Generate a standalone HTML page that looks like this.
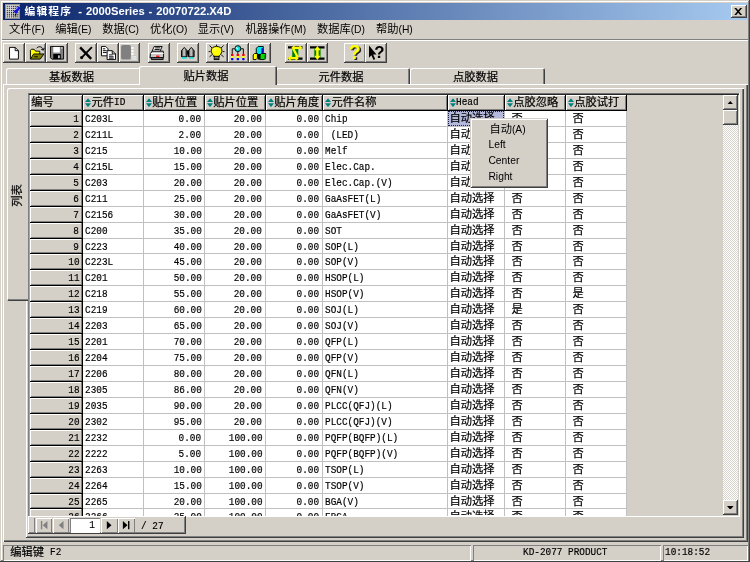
<!DOCTYPE html><html lang="zh"><head><meta charset="utf-8"><title>编辑程序</title><style>
*{box-sizing:border-box;margin:0;padding:0}
html,body{width:750px;height:562px;overflow:hidden;background:#d4d0c8}
#w{position:absolute;left:0;top:0;width:750px;height:562px;background:#d4d0c8;will-change:transform;
 font-family:"Liberation Serif","Noto Sans CJK SC",serif;font-size:11.25px;line-height:15px;color:#000;overflow:hidden}
#w div,#w span,#w svg{position:absolute}
.ui{font-family:"Liberation Sans","Noto Sans CJK SC",sans-serif;white-space:pre}
.t{white-space:pre;height:15px;-webkit-text-stroke:.2px #000}
.mo{-webkit-text-stroke:.2px #000;font-family:"Liberation Mono",monospace;font-size:11.25px;line-height:15px;height:15px;white-space:pre;transform:scaleX(0.8333);transform-origin:0 0}
.mr{transform-origin:100% 0;text-align:right}
.m{height:18px;line-height:17px;font-size:11.25px}
.m i{font-style:normal;font-size:10.3px}
.hc{background:#d4d0c8;box-shadow:inset 1px 1px 0 #fff,inset -1px -1px 0 #808080}
</style></head><body><div id="w">
<div style="left:0;top:0;width:750px;height:562px;box-shadow:inset -1px -1px 0 #404040,inset 1px 1px 0 #d4d0c8,inset -2px -2px 0 #808080,inset 2px 2px 0 #fff"></div>
<div style="left:3px;top:3px;width:745px;height:17px;background:linear-gradient(90deg,#0a246a 0%,#a6caf0 100%)"></div>
<svg style="left:4.69px;top:3.75px" width="15.0" height="15.0" viewBox="0 0 16 16"><rect x="0.5" y="0.5" width="15" height="15" fill="#d8d8d8" stroke="#909090"/><defs><pattern id="dg" x="1.700" y="1.700" width="2.300" height="2.300" patternUnits="userSpaceOnUse"><rect width="1.300" height="1.300" fill="#101010"/></pattern></defs><rect x="1.700" y="1.700" width="12.800" height="12.800" fill="url(#dg)"/><path d="M9.300 8.300l4.200-6.300 2.800 2-4.200 6.300z" fill="#1010e8"/><path d="M10.800 6.200l3.200-2.600" stroke="#d0d0ff" stroke-width=".9"/><path d="M11.500 10.300l-.6 2.200" stroke="#000" stroke-width="1"/></svg>
<div class="ui" style="left:24.6px;top:3.8px;height:15px;line-height:15px;color:#fff;font-weight:bold;font-size:11.25px"><span style="position:static;letter-spacing:1.1px;font-size:10.75px">编辑程序</span><span style="position:static;word-spacing:.75px;margin-left:2.4px"> - 2000Series - 20070722.X4D</span></div>
<div style="left:731px;top:5px;width:16px;height:13px;box-shadow:inset -1px -1px 0 #404040,inset 1px 1px 0 #fff,inset -2px -2px 0 #808080;background:#d4d0c8"></div>
<svg style="left:734.44px;top:7.88px" width="8.44" height="6.94" viewBox="0 0 8 7"><path d="M0 0h2l2 2.3L6 0h2L5 3.5 8 7H6L4 4.7 2 7H0l3-3.5z" fill="#000"/></svg>
<div class="ui m" style="left:8.91px;top:20.62px;">文件<i>(F)</i></div>
<div class="ui m" style="left:55.31px;top:20.62px;">编辑<i>(E)</i></div>
<div class="ui m" style="left:102.19px;top:20.62px;">数据<i>(C)</i></div>
<div class="ui m" style="left:150.0px;top:20.62px;">优化<i>(O)</i></div>
<div class="ui m" style="left:197.81px;top:20.62px;">显示<i>(V)</i></div>
<div class="ui m" style="left:245.62px;top:20.62px;">机器操作<i>(M)</i></div>
<div class="ui m" style="left:316.88px;top:20.62px;">数据库<i>(D)</i></div>
<div class="ui m" style="left:375.94px;top:20.62px;">帮助<i>(H)</i></div>
<div style="left:2px;top:39px;width:746px;height:1px;background:#808080"></div>
<div style="left:2px;top:40px;width:746px;height:1px;background:#fff"></div>
<div style="left:3px;top:43px;width:22px;height:20px;box-shadow:inset -1px -1px 0 #404040,inset 1px 1px 0 #fff,inset -2px -2px 0 #808080;background:#d4d0c8"></div>
<svg style="left:7.03px;top:45.94px;overflow:visible" width="15" height="14.06" viewBox="0 0 16 15"><path d="M2.700 1.500h6l3.500 3.500v9h-9.500z" fill="#fff" stroke="#000"/><path d="M8.700 1.500v3.500h3.500" fill="none" stroke="#000"/></svg>
<div style="left:25px;top:43px;width:21px;height:20px;box-shadow:inset -1px -1px 0 #404040,inset 1px 1px 0 #fff,inset -2px -2px 0 #808080;background:#d4d0c8"></div>
<svg style="left:28.59px;top:45.94px;overflow:visible" width="15" height="14.06" viewBox="0 0 16 15"><path d="M1.500 14V4.500l1-1h3l1.500 2h4.500v3" fill="#ffff00" stroke="#000"/><path d="M1.500 14l3.500-5.500h11l-4 5.500z" fill="#808000" stroke="#000"/><path d="M5.500 11.500h4" stroke="#000"/><path d="M8 2.500c2-2.500 6-2.500 7 1.500" fill="none" stroke="#000"/><path d="M13 3.500l2.300 1 .900-2.500" fill="none" stroke="#000"/></svg>
<div style="left:46px;top:43px;width:22px;height:20px;box-shadow:inset -1px -1px 0 #404040,inset 1px 1px 0 #fff,inset -2px -2px 0 #808080;background:#d4d0c8"></div>
<svg style="left:50.16px;top:45.94px;overflow:visible" width="15" height="14.06" viewBox="0 0 16 15"><path d="M.500.500h14v13.500h-12.500l-1.500-1.500z" fill="#808080" stroke="#000"/><rect x="3.500" y="1" width="7" height="6" fill="#fff"/><rect x="3.500" y="8.500" width="8" height="5.500" fill="#000"/><rect x="8.500" y="10" width="2" height="3" fill="#c0c0c0"/><rect x="12" y="1.500" width="1.200" height="1.200" fill="#fff"/></svg>
<div style="left:75px;top:43px;width:22px;height:20px;box-shadow:inset -1px -1px 0 #404040,inset 1px 1px 0 #fff,inset -2px -2px 0 #808080;background:#d4d0c8"></div>
<svg style="left:79.22px;top:45.94px;overflow:visible" width="15" height="14.06" viewBox="0 0 16 15"><path d="M1.200 1.500L13 13.800" stroke="#000" stroke-width="2.600" fill="none"/><path d="M13.800 1.300L2.800 12.300" stroke="#000" stroke-width="1.900" fill="none"/><circle cx="2.800" cy="12.400" r="1.700" fill="#000"/></svg>
<div style="left:97px;top:43px;width:22px;height:20px;box-shadow:inset -1px -1px 0 #404040,inset 1px 1px 0 #fff,inset -2px -2px 0 #808080;background:#d4d0c8"></div>
<svg style="left:100.78px;top:45.94px;overflow:visible" width="15" height="14.06" viewBox="0 0 16 15"><path d="M.500.500h4.500l2.500 2.500v7.500h-7z" fill="#fff" stroke="#000"/><path d="M2 3h2.500M2 5h4M2 7h4" stroke="#000"/><path d="M6.500 5h5.500l3.500 3.500v6h-9z" fill="#fff" stroke="#000"/><path d="M12 5v3.500h3.500" fill="none" stroke="#000"/><path d="M8.500 9.500h4M8.500 11.500h5M8.500 13h5" stroke="#000"/></svg>
<div style="left:119px;top:43px;width:21px;height:20px;box-shadow:inset -1px -1px 0 #404040,inset 1px 1px 0 #fff,inset -2px -2px 0 #808080;background:#d4d0c8"></div>
<svg style="left:122.34px;top:45.94px;overflow:visible" width="15" height="14.06" viewBox="0 0 16 15"><rect x="-1" y="-1.200" width="10.500" height="15.700" rx="2" fill="#808080"/><path d="M10 1h2.300v2.300h-2.300zM10 4.300h2.300v2.300h-2.300zM10 7.600h2.300v2.300h-2.300z" fill="#fff"/><path d="M9.800 10.800h6v4h-6z" fill="#fff" stroke="#b0b0b0" stroke-width=".5"/><path d="M10 12.800h5.500" stroke="#b8b8b8"/></svg>
<div style="left:148px;top:43px;width:22px;height:20px;box-shadow:inset -1px -1px 0 #404040,inset 1px 1px 0 #fff,inset -2px -2px 0 #808080;background:#d4d0c8"></div>
<svg style="left:150.47px;top:45.94px;overflow:visible" width="15" height="14.06" viewBox="0 0 16 15"><path d="M4.500.500h8.500l-2.500 5.500h-8.500z" fill="#fff" stroke="#000"/><path d="M5.500 2h5.500M4.800 3.700h5.500" stroke="#000"/><path d="M.500 8l2-2.500h11.500l.500 2.500v4.500h-14.500z" fill="#c8c8c8" stroke="#000"/><path d="M1 8h13.500" stroke="#fff"/><path d="M1.500 12.500h12.500v2h-12.500z" fill="#808080" stroke="#000"/><rect x="6.500" y="10.200" width="3.500" height="1.400" fill="#ff0000"/></svg>
<div style="left:177px;top:43px;width:22px;height:20px;box-shadow:inset -1px -1px 0 #404040,inset 1px 1px 0 #fff,inset -2px -2px 0 #808080;background:#d4d0c8"></div>
<svg style="left:180.94px;top:45.94px;overflow:visible" width="15" height="14.06" viewBox="0 0 16 15"><defs><linearGradient id="bg" x1="0" x2="1"><stop offset="0" stop-color="#202020"/><stop offset=".45" stop-color="#d8d8d8"/><stop offset="1" stop-color="#202020"/></linearGradient></defs><path d="M.500 11.500V5l3-3.500 3 3.500v6.500z" fill="url(#bg)" stroke="#000"/><path d="M8 11.500V5l3-3.500 3 3.500v6.500z" fill="url(#bg)" stroke="#000"/><rect x="6.500" y="5" width="1.500" height="4" fill="#000"/><rect x="1" y="12" width="5" height="1.500" fill="#00e0e0"/><rect x="8.500" y="12" width="5" height="1.500" fill="#00e0e0"/></svg>
<div style="left:206px;top:43px;width:22px;height:20px;box-shadow:inset -1px -1px 0 #404040,inset 1px 1px 0 #fff,inset -2px -2px 0 #808080;background:#d4d0c8"></div>
<svg style="left:210.0px;top:45.94px;overflow:visible" width="15" height="14.06" viewBox="0 0 16 15"><path d="M-.500 -.500l3 3M14.500 -.500l-3 3M7 -1.500v1.500M-1.500 6h2M15.500 6h-2M-.500 11.500l2.500-2M14.500 11.500l-2.500-2" stroke="#000"/><path d="M7 .500c-7 0-7 6.500-3 9.800v1h6v-1c4-3.300 4-9.800-3-9.800z" fill="#ffff00" stroke="#000"/><path d="M4 3.500l2-1.500M4.500 5l2.500-2" stroke="#fff" stroke-width=".7"/><rect x="4.500" y="11" width="5" height="3.500" fill="#c0c0c0" stroke="#000"/><path d="M5 13h4" stroke="#000"/></svg>
<div style="left:228px;top:43px;width:21px;height:20px;box-shadow:inset -1px -1px 0 #404040,inset 1px 1px 0 #fff,inset -2px -2px 0 #808080;background:#d4d0c8"></div>
<svg style="left:230.91px;top:45.94px;overflow:visible" width="15" height="14.06" viewBox="0 0 16 15"><circle cx="7.300" cy="2.800" r="3.200" fill="#00e0e0" stroke="#000"/><path d="M5.500 1.500l2 2" stroke="#fff" stroke-width="1.200"/><path d="M4 3H1.300v5.500M10.500 3h2.700v5.500M7.300 6v2.500" fill="none" stroke="#000"/><rect x="0" y="8.500" width="2.600" height="2.200" fill="#ff0000"/><rect x="0" y="10.700" width="2.600" height="2.200" fill="#ffff00"/><rect x="0" y="12.900" width="2.600" height="2.200" rx=".8" fill="#0000ff"/><rect x="6" y="8.500" width="2.600" height="2.200" fill="#ff0000"/><rect x="6" y="10.700" width="2.600" height="2.200" fill="#ffff00"/><rect x="6" y="12.900" width="2.600" height="2.200" rx=".8" fill="#0000ff"/><rect x="11.9" y="8.500" width="2.600" height="2.200" fill="#ff0000"/><rect x="11.9" y="10.700" width="2.600" height="2.200" fill="#ffff00"/><rect x="11.9" y="12.900" width="2.600" height="2.200" rx=".8" fill="#0000ff"/></svg>
<div style="left:249px;top:43px;width:22px;height:20px;box-shadow:inset -1px -1px 0 #404040,inset 1px 1px 0 #fff,inset -2px -2px 0 #808080;background:#d4d0c8"></div>
<svg style="left:253.12px;top:45.94px;overflow:visible" width="15" height="14.06" viewBox="0 0 16 15"><path d="M3.500 2.500l2-2h5.500v6.500l-2 2h-5.500z" fill="#00e8e8" stroke="#000"/><path d="M9.800 2.500v6" stroke="#0000c0" stroke-width="1.600"/><path d="M.200 9.500l1.500-1.500h3v5l-1.500 1.500h-3z" fill="#ffff00" stroke="#000"/><path d="M7.500 9.500l1.500-1.500h4.500v5l-1.500 1.500h-4.500z" fill="#00e000" stroke="#000"/><path d="M12.700 9.500v5" stroke="#008000" stroke-width="1.500"/><rect x="5" y="9" width="2.500" height="5.500" fill="#000"/></svg>
<div style="left:285px;top:43px;width:22px;height:20px;box-shadow:inset -1px -1px 0 #404040,inset 1px 1px 0 #fff,inset -2px -2px 0 #808080;background:#d4d0c8"></div>
<svg style="left:288.0px;top:45.94px;overflow:visible" width="15" height="14.06" viewBox="0 0 16 15"><path d="M0 1.500h15.500M0 13.500h15.500" stroke="#000" stroke-width="2.200"/><rect x="4.500" y="2.500" width="6.500" height="10" fill="#008000"/><path d="M5.500 2h7M3 13h7M5.500 3L10.500 12" stroke="#ffff00" stroke-width="2.400"/><path d="M3.500 2L7-1v6zM15.500 2L12-1v6zM-.500 13L3 10v6zM11.500 13L8 10v6z" fill="#ffff00"/></svg>
<div style="left:307px;top:43px;width:21px;height:20px;box-shadow:inset -1px -1px 0 #404040,inset 1px 1px 0 #fff,inset -2px -2px 0 #808080;background:#d4d0c8"></div>
<svg style="left:310.31px;top:45.94px;overflow:visible" width="15" height="14.06" viewBox="0 0 16 15"><path d="M0 1.500h15.500M0 13.500h15.500" stroke="#000" stroke-width="2.200"/><rect x="4.500" y="2.500" width="6.800" height="10" fill="#008000"/><path d="M7.900 3v9" stroke="#ffff00" stroke-width="2.600"/><path d="M4.500 4.500L7.900 0l3.400 4.500zM4.500 10.500l3.400 4.500 3.400-4.500z" fill="#ffff00"/></svg>
<div style="left:344px;top:43px;width:22px;height:20px;box-shadow:inset -1px -1px 0 #404040,inset 1px 1px 0 #fff,inset -2px -2px 0 #808080;background:#d4d0c8"></div>
<svg style="left:347.81px;top:45.94px;overflow:visible" width="15" height="14.06" viewBox="0 0 16 15"><text x="8.800" y="15.200" font-family="Liberation Sans,sans-serif" font-weight="bold" font-size="21" text-anchor="middle" fill="#202020">?</text><text x="7.300" y="14" font-family="Liberation Sans,sans-serif" font-weight="bold" font-size="21" text-anchor="middle" fill="#ffff00">?</text></svg>
<div style="left:365px;top:43px;width:22px;height:20px;box-shadow:inset -1px -1px 0 #404040,inset 1px 1px 0 #fff,inset -2px -2px 0 #808080;background:#d4d0c8"></div>
<svg style="left:368.91px;top:45.94px;overflow:visible" width="15" height="14.06" viewBox="0 0 16 15"><path d="M0 -.500v13l2.600-2.600 2.200 5 1.800-.900-2.200-4.800H8z" fill="#000"/><text x="11.200" y="12.300" font-family="Liberation Sans,sans-serif" font-weight="bold" font-size="18" text-anchor="middle" fill="#000">?</text></svg>
<div style="left:3px;top:84px;width:745px;height:458px;box-shadow:inset 1px 1px 0 #fff,inset -1px -1px 0 #404040,inset -2px -2px 0 #808080"></div>
<div style="left:6px;top:68px;width:135px;height:16px;background:#d4d0c8;border-radius:2px 2px 0 0;box-shadow:inset 1px 1px 0 #fff,inset -1px 0 0 #404040,inset -2px 0 0 #808080"></div>
<div class="t" style="left:4px;top:70.31px;width:135px;text-align:center">基板数据</div>
<div style="left:276px;top:68px;width:134px;height:16px;background:#d4d0c8;border-radius:2px 2px 0 0;box-shadow:inset 1px 1px 0 #fff,inset -1px 0 0 #404040,inset -2px 0 0 #808080"></div>
<div class="t" style="left:274px;top:70.31px;width:134px;text-align:center">元件数据</div>
<div style="left:410px;top:68px;width:135px;height:16px;background:#d4d0c8;border-radius:2px 2px 0 0;box-shadow:inset 1px 1px 0 #fff,inset -1px 0 0 #404040,inset -2px 0 0 #808080"></div>
<div class="t" style="left:408px;top:70.31px;width:135px;text-align:center">点胶数据</div>
<div style="left:139px;top:66px;width:138px;height:19px;background:#d4d0c8;border-radius:2px 2px 0 0;box-shadow:inset 1px 1px 0 #fff,inset -1px 0 0 #404040,inset -2px 0 0 #808080"></div>
<div class="t" style="left:137px;top:68.91px;width:138px;text-align:center">贴片数据</div>
<div style="left:26px;top:88px;width:718px;height:450px;box-shadow:inset 0 1px 0 #fff,inset -1px -1px 0 #404040,inset -2px -2px 0 #808080"></div>
<div style="left:26px;top:301px;width:1px;height:236px;background:#fff"></div>
<div style="left:7px;top:88px;width:21px;height:213px;background:#d4d0c8;border-radius:2px 0 0 2px;box-shadow:inset 1px 1px 0 #fff,inset 0 -1px 0 #404040,inset 0 -2px 0 #808080"></div>
<div class="t" style="left:-13.120000000000001px;top:187.5px;width:60px;text-align:center;transform:rotate(-90deg)">列表</div>
<div style="left:28px;top:93px;width:712px;height:424px;background:#d4d0c8;box-shadow:inset -1px -1px 0 #fff"></div>
<div style="left:28px;top:93px;width:1px;height:423px;background:#808080"></div>
<div style="left:29px;top:93px;width:1px;height:423px;background:#a4a4a4"></div>
<div style="left:28px;top:93px;width:711px;height:1px;background:#707070"></div>
<div style="left:29px;top:94px;width:710px;height:1px;background:#282828"></div>
<div style="left:83px;top:111px;width:544px;height:405px;background:#fff"></div>
<div class="hc" style="left:30px;top:95px;width:52px;height:15px"></div>
<div class="t" style="left:31.31px;top:95.25px;">编号</div>
<div style="left:82px;top:95px;width:1px;height:16px;background:#000"></div>
<div class="hc" style="left:83px;top:95px;width:60px;height:15px"></div>
<svg style="left:84.94px;top:98.06px" width="6.0" height="9.38" viewBox="0 0 7 10.500"><path d="M3.500 0L7 4.500H0zM3.500 10.500L7 6H0z" fill="#008080"/></svg>
<div class="t" style="left:91.41px;top:95.25px;">元件</div>
<div class="mo" style="left:113.91px;top:95.25px;">ID</div>
<div style="left:143px;top:95px;width:1px;height:16px;background:#000"></div>
<div class="hc" style="left:144px;top:95px;width:60px;height:15px"></div>
<svg style="left:145.88px;top:98.06px" width="6.0" height="9.38" viewBox="0 0 7 10.500"><path d="M3.500 0L7 4.500H0zM3.500 10.500L7 6H0z" fill="#008080"/></svg>
<div class="t" style="left:152.34px;top:95.25px;">贴片位置</div>
<div style="left:204px;top:95px;width:1px;height:16px;background:#000"></div>
<div class="hc" style="left:205px;top:95px;width:60px;height:15px"></div>
<svg style="left:206.81px;top:98.06px" width="6.0" height="9.38" viewBox="0 0 7 10.500"><path d="M3.500 0L7 4.500H0zM3.500 10.500L7 6H0z" fill="#008080"/></svg>
<div class="t" style="left:213.28px;top:95.25px;">贴片位置</div>
<div style="left:265px;top:95px;width:1px;height:16px;background:#000"></div>
<div class="hc" style="left:266px;top:95px;width:56px;height:15px"></div>
<svg style="left:267.75px;top:98.06px" width="6.0" height="9.38" viewBox="0 0 7 10.500"><path d="M3.500 0L7 4.500H0zM3.500 10.500L7 6H0z" fill="#008080"/></svg>
<div class="t" style="left:274.22px;top:95.25px;">贴片角度</div>
<div style="left:322px;top:95px;width:1px;height:16px;background:#000"></div>
<div class="hc" style="left:323px;top:95px;width:124px;height:15px"></div>
<svg style="left:324.94px;top:98.06px" width="6.0" height="9.38" viewBox="0 0 7 10.500"><path d="M3.500 0L7 4.500H0zM3.500 10.500L7 6H0z" fill="#008080"/></svg>
<div class="t" style="left:331.41px;top:95.25px;">元件名称</div>
<div style="left:447px;top:95px;width:1px;height:16px;background:#000"></div>
<div class="hc" style="left:448px;top:95px;width:56px;height:15px"></div>
<svg style="left:449.62px;top:98.06px" width="6.0" height="9.38" viewBox="0 0 7 10.500"><path d="M3.500 0L7 4.500H0zM3.500 10.500L7 6H0z" fill="#008080"/></svg>
<div class="mo" style="left:456.09px;top:95.25px;">Head</div>
<div style="left:504px;top:95px;width:1px;height:16px;background:#000"></div>
<div class="hc" style="left:505px;top:95px;width:60px;height:15px"></div>
<svg style="left:506.81px;top:98.06px" width="6.0" height="9.38" viewBox="0 0 7 10.500"><path d="M3.500 0L7 4.500H0zM3.500 10.500L7 6H0z" fill="#008080"/></svg>
<div class="t" style="left:513.28px;top:95.25px;">点胶忽略</div>
<div style="left:565px;top:95px;width:1px;height:16px;background:#000"></div>
<div class="hc" style="left:566px;top:95px;width:60px;height:15px"></div>
<svg style="left:567.75px;top:98.06px" width="6.0" height="9.38" viewBox="0 0 7 10.500"><path d="M3.500 0L7 4.500H0zM3.500 10.500L7 6H0z" fill="#008080"/></svg>
<div class="t" style="left:574.22px;top:95.25px;">点胶试打</div>
<div style="left:626px;top:95px;width:1px;height:16px;background:#000"></div>
<div style="left:30px;top:110px;width:597px;height:1px;background:#000"></div>
<div style="left:82px;top:111px;width:1px;height:405px;background:#000"></div>
<div style="left:81px;top:111px;width:1px;height:405px;background:#808080"></div>
<div style="left:143px;top:111px;width:1px;height:405px;background:#c0c0c0"></div>
<div style="left:204px;top:111px;width:1px;height:405px;background:#c0c0c0"></div>
<div style="left:265px;top:111px;width:1px;height:405px;background:#c0c0c0"></div>
<div style="left:322px;top:111px;width:1px;height:405px;background:#c0c0c0"></div>
<div style="left:447px;top:111px;width:1px;height:405px;background:#c0c0c0"></div>
<div style="left:504px;top:111px;width:1px;height:405px;background:#c0c0c0"></div>
<div style="left:565px;top:111px;width:1px;height:405px;background:#c0c0c0"></div>
<div style="left:626px;top:111px;width:1px;height:405px;background:#c0c0c0"></div>
<div style="left:30px;top:111px;width:51px;height:15px;background:#d4d0c8;box-shadow:inset 1px 1px 0 #fff,inset 0 -1px 0 #808080"></div>
<div style="left:30px;top:126px;width:52px;height:1px;background:#000"></div>
<div style="left:83px;top:126px;width:544px;height:1px;background:#c0c0c0"></div>
<div style="left:448px;top:111px;width:56px;height:15px;background:#b4b8dc;outline:1px dotted #202040;outline-offset:-1px"></div>
<div class="mo mr" style="right:670.78px;top:112.0px;">1</div>
<div class="mo" style="left:84.66px;top:112.0px;">C203L</div>
<div class="mo mr" style="right:548.72px;top:112.0px;">0.00</div>
<div class="mo mr" style="right:487.78px;top:112.0px;">20.00</div>
<div class="mo mr" style="right:430.59px;top:112.0px;">0.00</div>
<div class="mo" style="left:324.56px;top:112.0px;">Chip</div>
<div class="t" style="left:449.44px;top:111.0px;">自动选择</div>
<div class="t" style="left:511.59px;top:111.0px;">否</div>
<div class="t" style="left:572.53px;top:111.0px;">否</div>
<div style="left:30px;top:127px;width:51px;height:15px;background:#d4d0c8;box-shadow:inset 1px 1px 0 #fff,inset 0 -1px 0 #808080"></div>
<div style="left:30px;top:142px;width:52px;height:1px;background:#000"></div>
<div style="left:83px;top:142px;width:544px;height:1px;background:#c0c0c0"></div>
<div class="mo mr" style="right:670.78px;top:128.0px;">2</div>
<div class="mo" style="left:84.66px;top:128.0px;">C211L</div>
<div class="mo mr" style="right:548.72px;top:128.0px;">2.00</div>
<div class="mo mr" style="right:487.78px;top:128.0px;">20.00</div>
<div class="mo mr" style="right:430.59px;top:128.0px;">0.00</div>
<div class="mo" style="left:324.56px;top:128.0px;">&nbsp;(LED)</div>
<div class="t" style="left:449.44px;top:127.0px;">自动选择</div>
<div class="t" style="left:511.59px;top:127.0px;">否</div>
<div class="t" style="left:572.53px;top:127.0px;">否</div>
<div style="left:30px;top:143px;width:51px;height:15px;background:#d4d0c8;box-shadow:inset 1px 1px 0 #fff,inset 0 -1px 0 #808080"></div>
<div style="left:30px;top:158px;width:52px;height:1px;background:#000"></div>
<div style="left:83px;top:158px;width:544px;height:1px;background:#c0c0c0"></div>
<div class="mo mr" style="right:670.78px;top:144.0px;">3</div>
<div class="mo" style="left:84.66px;top:144.0px;">C215</div>
<div class="mo mr" style="right:548.72px;top:144.0px;">10.00</div>
<div class="mo mr" style="right:487.78px;top:144.0px;">20.00</div>
<div class="mo mr" style="right:430.59px;top:144.0px;">0.00</div>
<div class="mo" style="left:324.56px;top:144.0px;">Melf</div>
<div class="t" style="left:449.44px;top:143.0px;">自动选择</div>
<div class="t" style="left:511.59px;top:143.0px;">否</div>
<div class="t" style="left:572.53px;top:143.0px;">否</div>
<div style="left:30px;top:159px;width:51px;height:15px;background:#d4d0c8;box-shadow:inset 1px 1px 0 #fff,inset 0 -1px 0 #808080"></div>
<div style="left:30px;top:174px;width:52px;height:1px;background:#000"></div>
<div style="left:83px;top:174px;width:544px;height:1px;background:#c0c0c0"></div>
<div class="mo mr" style="right:670.78px;top:160.0px;">4</div>
<div class="mo" style="left:84.66px;top:160.0px;">C215L</div>
<div class="mo mr" style="right:548.72px;top:160.0px;">15.00</div>
<div class="mo mr" style="right:487.78px;top:160.0px;">20.00</div>
<div class="mo mr" style="right:430.59px;top:160.0px;">0.00</div>
<div class="mo" style="left:324.56px;top:160.0px;">Elec.Cap.</div>
<div class="t" style="left:449.44px;top:159.0px;">自动选择</div>
<div class="t" style="left:511.59px;top:159.0px;">否</div>
<div class="t" style="left:572.53px;top:159.0px;">否</div>
<div style="left:30px;top:175px;width:51px;height:15px;background:#d4d0c8;box-shadow:inset 1px 1px 0 #fff,inset 0 -1px 0 #808080"></div>
<div style="left:30px;top:190px;width:52px;height:1px;background:#000"></div>
<div style="left:83px;top:190px;width:544px;height:1px;background:#c0c0c0"></div>
<div class="mo mr" style="right:670.78px;top:176.0px;">5</div>
<div class="mo" style="left:84.66px;top:176.0px;">C203</div>
<div class="mo mr" style="right:548.72px;top:176.0px;">20.00</div>
<div class="mo mr" style="right:487.78px;top:176.0px;">20.00</div>
<div class="mo mr" style="right:430.59px;top:176.0px;">0.00</div>
<div class="mo" style="left:324.56px;top:176.0px;">Elec.Cap.(V)</div>
<div class="t" style="left:449.44px;top:175.0px;">自动选择</div>
<div class="t" style="left:511.59px;top:175.0px;">否</div>
<div class="t" style="left:572.53px;top:175.0px;">否</div>
<div style="left:30px;top:191px;width:51px;height:15px;background:#d4d0c8;box-shadow:inset 1px 1px 0 #fff,inset 0 -1px 0 #808080"></div>
<div style="left:30px;top:206px;width:52px;height:1px;background:#000"></div>
<div style="left:83px;top:206px;width:544px;height:1px;background:#c0c0c0"></div>
<div class="mo mr" style="right:670.78px;top:192.0px;">6</div>
<div class="mo" style="left:84.66px;top:192.0px;">C211</div>
<div class="mo mr" style="right:548.72px;top:192.0px;">25.00</div>
<div class="mo mr" style="right:487.78px;top:192.0px;">20.00</div>
<div class="mo mr" style="right:430.59px;top:192.0px;">0.00</div>
<div class="mo" style="left:324.56px;top:192.0px;">GaAsFET(L)</div>
<div class="t" style="left:449.44px;top:191.0px;">自动选择</div>
<div class="t" style="left:511.59px;top:191.0px;">否</div>
<div class="t" style="left:572.53px;top:191.0px;">否</div>
<div style="left:30px;top:207px;width:51px;height:15px;background:#d4d0c8;box-shadow:inset 1px 1px 0 #fff,inset 0 -1px 0 #808080"></div>
<div style="left:30px;top:222px;width:52px;height:1px;background:#000"></div>
<div style="left:83px;top:222px;width:544px;height:1px;background:#c0c0c0"></div>
<div class="mo mr" style="right:670.78px;top:208.0px;">7</div>
<div class="mo" style="left:84.66px;top:208.0px;">C2156</div>
<div class="mo mr" style="right:548.72px;top:208.0px;">30.00</div>
<div class="mo mr" style="right:487.78px;top:208.0px;">20.00</div>
<div class="mo mr" style="right:430.59px;top:208.0px;">0.00</div>
<div class="mo" style="left:324.56px;top:208.0px;">GaAsFET(V)</div>
<div class="t" style="left:449.44px;top:207.0px;">自动选择</div>
<div class="t" style="left:511.59px;top:207.0px;">否</div>
<div class="t" style="left:572.53px;top:207.0px;">否</div>
<div style="left:30px;top:223px;width:51px;height:15px;background:#d4d0c8;box-shadow:inset 1px 1px 0 #fff,inset 0 -1px 0 #808080"></div>
<div style="left:30px;top:238px;width:52px;height:1px;background:#000"></div>
<div style="left:83px;top:238px;width:544px;height:1px;background:#c0c0c0"></div>
<div class="mo mr" style="right:670.78px;top:224.0px;">8</div>
<div class="mo" style="left:84.66px;top:224.0px;">C200</div>
<div class="mo mr" style="right:548.72px;top:224.0px;">35.00</div>
<div class="mo mr" style="right:487.78px;top:224.0px;">20.00</div>
<div class="mo mr" style="right:430.59px;top:224.0px;">0.00</div>
<div class="mo" style="left:324.56px;top:224.0px;">SOT</div>
<div class="t" style="left:449.44px;top:223.0px;">自动选择</div>
<div class="t" style="left:511.59px;top:223.0px;">否</div>
<div class="t" style="left:572.53px;top:223.0px;">否</div>
<div style="left:30px;top:239px;width:51px;height:14px;background:#d4d0c8;box-shadow:inset 1px 1px 0 #fff,inset 0 -1px 0 #808080"></div>
<div style="left:30px;top:253px;width:52px;height:1px;background:#000"></div>
<div style="left:83px;top:253px;width:544px;height:1px;background:#c0c0c0"></div>
<div class="mo mr" style="right:670.78px;top:240.0px;">9</div>
<div class="mo" style="left:84.66px;top:240.0px;">C223</div>
<div class="mo mr" style="right:548.72px;top:240.0px;">40.00</div>
<div class="mo mr" style="right:487.78px;top:240.0px;">20.00</div>
<div class="mo mr" style="right:430.59px;top:240.0px;">0.00</div>
<div class="mo" style="left:324.56px;top:240.0px;">SOP(L)</div>
<div class="t" style="left:449.44px;top:239.0px;">自动选择</div>
<div class="t" style="left:511.59px;top:239.0px;">否</div>
<div class="t" style="left:572.53px;top:239.0px;">否</div>
<div style="left:30px;top:254px;width:51px;height:15px;background:#d4d0c8;box-shadow:inset 1px 1px 0 #fff,inset 0 -1px 0 #808080"></div>
<div style="left:30px;top:269px;width:52px;height:1px;background:#000"></div>
<div style="left:83px;top:269px;width:544px;height:1px;background:#c0c0c0"></div>
<div class="mo mr" style="right:670.78px;top:255.0px;">10</div>
<div class="mo" style="left:84.66px;top:255.0px;">C223L</div>
<div class="mo mr" style="right:548.72px;top:255.0px;">45.00</div>
<div class="mo mr" style="right:487.78px;top:255.0px;">20.00</div>
<div class="mo mr" style="right:430.59px;top:255.0px;">0.00</div>
<div class="mo" style="left:324.56px;top:255.0px;">SOP(V)</div>
<div class="t" style="left:449.44px;top:254.0px;">自动选择</div>
<div class="t" style="left:511.59px;top:254.0px;">否</div>
<div class="t" style="left:572.53px;top:254.0px;">否</div>
<div style="left:30px;top:270px;width:51px;height:15px;background:#d4d0c8;box-shadow:inset 1px 1px 0 #fff,inset 0 -1px 0 #808080"></div>
<div style="left:30px;top:285px;width:52px;height:1px;background:#000"></div>
<div style="left:83px;top:285px;width:544px;height:1px;background:#c0c0c0"></div>
<div class="mo mr" style="right:670.78px;top:271.0px;">11</div>
<div class="mo" style="left:84.66px;top:271.0px;">C201</div>
<div class="mo mr" style="right:548.72px;top:271.0px;">50.00</div>
<div class="mo mr" style="right:487.78px;top:271.0px;">20.00</div>
<div class="mo mr" style="right:430.59px;top:271.0px;">0.00</div>
<div class="mo" style="left:324.56px;top:271.0px;">HSOP(L)</div>
<div class="t" style="left:449.44px;top:270.0px;">自动选择</div>
<div class="t" style="left:511.59px;top:270.0px;">否</div>
<div class="t" style="left:572.53px;top:270.0px;">否</div>
<div style="left:30px;top:286px;width:51px;height:15px;background:#d4d0c8;box-shadow:inset 1px 1px 0 #fff,inset 0 -1px 0 #808080"></div>
<div style="left:30px;top:301px;width:52px;height:1px;background:#000"></div>
<div style="left:83px;top:301px;width:544px;height:1px;background:#c0c0c0"></div>
<div class="mo mr" style="right:670.78px;top:287.0px;">12</div>
<div class="mo" style="left:84.66px;top:287.0px;">C218</div>
<div class="mo mr" style="right:548.72px;top:287.0px;">55.00</div>
<div class="mo mr" style="right:487.78px;top:287.0px;">20.00</div>
<div class="mo mr" style="right:430.59px;top:287.0px;">0.00</div>
<div class="mo" style="left:324.56px;top:287.0px;">HSOP(V)</div>
<div class="t" style="left:449.44px;top:286.0px;">自动选择</div>
<div class="t" style="left:511.59px;top:286.0px;">否</div>
<div class="t" style="left:572.53px;top:286.0px;">是</div>
<div style="left:30px;top:302px;width:51px;height:15px;background:#d4d0c8;box-shadow:inset 1px 1px 0 #fff,inset 0 -1px 0 #808080"></div>
<div style="left:30px;top:317px;width:52px;height:1px;background:#000"></div>
<div style="left:83px;top:317px;width:544px;height:1px;background:#c0c0c0"></div>
<div class="mo mr" style="right:670.78px;top:303.0px;">13</div>
<div class="mo" style="left:84.66px;top:303.0px;">C219</div>
<div class="mo mr" style="right:548.72px;top:303.0px;">60.00</div>
<div class="mo mr" style="right:487.78px;top:303.0px;">20.00</div>
<div class="mo mr" style="right:430.59px;top:303.0px;">0.00</div>
<div class="mo" style="left:324.56px;top:303.0px;">SOJ(L)</div>
<div class="t" style="left:449.44px;top:302.0px;">自动选择</div>
<div class="t" style="left:511.59px;top:302.0px;">是</div>
<div class="t" style="left:572.53px;top:302.0px;">否</div>
<div style="left:30px;top:318px;width:51px;height:15px;background:#d4d0c8;box-shadow:inset 1px 1px 0 #fff,inset 0 -1px 0 #808080"></div>
<div style="left:30px;top:333px;width:52px;height:1px;background:#000"></div>
<div style="left:83px;top:333px;width:544px;height:1px;background:#c0c0c0"></div>
<div class="mo mr" style="right:670.78px;top:319.0px;">14</div>
<div class="mo" style="left:84.66px;top:319.0px;">2203</div>
<div class="mo mr" style="right:548.72px;top:319.0px;">65.00</div>
<div class="mo mr" style="right:487.78px;top:319.0px;">20.00</div>
<div class="mo mr" style="right:430.59px;top:319.0px;">0.00</div>
<div class="mo" style="left:324.56px;top:319.0px;">SOJ(V)</div>
<div class="t" style="left:449.44px;top:318.0px;">自动选择</div>
<div class="t" style="left:511.59px;top:318.0px;">否</div>
<div class="t" style="left:572.53px;top:318.0px;">否</div>
<div style="left:30px;top:334px;width:51px;height:15px;background:#d4d0c8;box-shadow:inset 1px 1px 0 #fff,inset 0 -1px 0 #808080"></div>
<div style="left:30px;top:349px;width:52px;height:1px;background:#000"></div>
<div style="left:83px;top:349px;width:544px;height:1px;background:#c0c0c0"></div>
<div class="mo mr" style="right:670.78px;top:335.0px;">15</div>
<div class="mo" style="left:84.66px;top:335.0px;">2201</div>
<div class="mo mr" style="right:548.72px;top:335.0px;">70.00</div>
<div class="mo mr" style="right:487.78px;top:335.0px;">20.00</div>
<div class="mo mr" style="right:430.59px;top:335.0px;">0.00</div>
<div class="mo" style="left:324.56px;top:335.0px;">QFP(L)</div>
<div class="t" style="left:449.44px;top:334.0px;">自动选择</div>
<div class="t" style="left:511.59px;top:334.0px;">否</div>
<div class="t" style="left:572.53px;top:334.0px;">否</div>
<div style="left:30px;top:350px;width:51px;height:15px;background:#d4d0c8;box-shadow:inset 1px 1px 0 #fff,inset 0 -1px 0 #808080"></div>
<div style="left:30px;top:365px;width:52px;height:1px;background:#000"></div>
<div style="left:83px;top:365px;width:544px;height:1px;background:#c0c0c0"></div>
<div class="mo mr" style="right:670.78px;top:351.0px;">16</div>
<div class="mo" style="left:84.66px;top:351.0px;">2204</div>
<div class="mo mr" style="right:548.72px;top:351.0px;">75.00</div>
<div class="mo mr" style="right:487.78px;top:351.0px;">20.00</div>
<div class="mo mr" style="right:430.59px;top:351.0px;">0.00</div>
<div class="mo" style="left:324.56px;top:351.0px;">QFP(V)</div>
<div class="t" style="left:449.44px;top:350.0px;">自动选择</div>
<div class="t" style="left:511.59px;top:350.0px;">否</div>
<div class="t" style="left:572.53px;top:350.0px;">否</div>
<div style="left:30px;top:366px;width:51px;height:15px;background:#d4d0c8;box-shadow:inset 1px 1px 0 #fff,inset 0 -1px 0 #808080"></div>
<div style="left:30px;top:381px;width:52px;height:1px;background:#000"></div>
<div style="left:83px;top:381px;width:544px;height:1px;background:#c0c0c0"></div>
<div class="mo mr" style="right:670.78px;top:367.0px;">17</div>
<div class="mo" style="left:84.66px;top:367.0px;">2206</div>
<div class="mo mr" style="right:548.72px;top:367.0px;">80.00</div>
<div class="mo mr" style="right:487.78px;top:367.0px;">20.00</div>
<div class="mo mr" style="right:430.59px;top:367.0px;">0.00</div>
<div class="mo" style="left:324.56px;top:367.0px;">QFN(L)</div>
<div class="t" style="left:449.44px;top:366.0px;">自动选择</div>
<div class="t" style="left:511.59px;top:366.0px;">否</div>
<div class="t" style="left:572.53px;top:366.0px;">否</div>
<div style="left:30px;top:382px;width:51px;height:15px;background:#d4d0c8;box-shadow:inset 1px 1px 0 #fff,inset 0 -1px 0 #808080"></div>
<div style="left:30px;top:397px;width:52px;height:1px;background:#000"></div>
<div style="left:83px;top:397px;width:544px;height:1px;background:#c0c0c0"></div>
<div class="mo mr" style="right:670.78px;top:383.0px;">18</div>
<div class="mo" style="left:84.66px;top:383.0px;">2305</div>
<div class="mo mr" style="right:548.72px;top:383.0px;">86.00</div>
<div class="mo mr" style="right:487.78px;top:383.0px;">20.00</div>
<div class="mo mr" style="right:430.59px;top:383.0px;">0.00</div>
<div class="mo" style="left:324.56px;top:383.0px;">QFN(V)</div>
<div class="t" style="left:449.44px;top:382.0px;">自动选择</div>
<div class="t" style="left:511.59px;top:382.0px;">否</div>
<div class="t" style="left:572.53px;top:382.0px;">否</div>
<div style="left:30px;top:398px;width:51px;height:15px;background:#d4d0c8;box-shadow:inset 1px 1px 0 #fff,inset 0 -1px 0 #808080"></div>
<div style="left:30px;top:413px;width:52px;height:1px;background:#000"></div>
<div style="left:83px;top:413px;width:544px;height:1px;background:#c0c0c0"></div>
<div class="mo mr" style="right:670.78px;top:399.0px;">19</div>
<div class="mo" style="left:84.66px;top:399.0px;">2035</div>
<div class="mo mr" style="right:548.72px;top:399.0px;">90.00</div>
<div class="mo mr" style="right:487.78px;top:399.0px;">20.00</div>
<div class="mo mr" style="right:430.59px;top:399.0px;">0.00</div>
<div class="mo" style="left:324.56px;top:399.0px;">PLCC(QFJ)(L)</div>
<div class="t" style="left:449.44px;top:398.0px;">自动选择</div>
<div class="t" style="left:511.59px;top:398.0px;">否</div>
<div class="t" style="left:572.53px;top:398.0px;">否</div>
<div style="left:30px;top:414px;width:51px;height:15px;background:#d4d0c8;box-shadow:inset 1px 1px 0 #fff,inset 0 -1px 0 #808080"></div>
<div style="left:30px;top:429px;width:52px;height:1px;background:#000"></div>
<div style="left:83px;top:429px;width:544px;height:1px;background:#c0c0c0"></div>
<div class="mo mr" style="right:670.78px;top:415.0px;">20</div>
<div class="mo" style="left:84.66px;top:415.0px;">2302</div>
<div class="mo mr" style="right:548.72px;top:415.0px;">95.00</div>
<div class="mo mr" style="right:487.78px;top:415.0px;">20.00</div>
<div class="mo mr" style="right:430.59px;top:415.0px;">0.00</div>
<div class="mo" style="left:324.56px;top:415.0px;">PLCC(QFJ)(V)</div>
<div class="t" style="left:449.44px;top:414.0px;">自动选择</div>
<div class="t" style="left:511.59px;top:414.0px;">否</div>
<div class="t" style="left:572.53px;top:414.0px;">否</div>
<div style="left:30px;top:430px;width:51px;height:15px;background:#d4d0c8;box-shadow:inset 1px 1px 0 #fff,inset 0 -1px 0 #808080"></div>
<div style="left:30px;top:445px;width:52px;height:1px;background:#000"></div>
<div style="left:83px;top:445px;width:544px;height:1px;background:#c0c0c0"></div>
<div class="mo mr" style="right:670.78px;top:431.0px;">21</div>
<div class="mo" style="left:84.66px;top:431.0px;">2232</div>
<div class="mo mr" style="right:548.72px;top:431.0px;">0.00</div>
<div class="mo mr" style="right:487.78px;top:431.0px;">100.00</div>
<div class="mo mr" style="right:430.59px;top:431.0px;">0.00</div>
<div class="mo" style="left:324.56px;top:431.0px;">PQFP(BQFP)(L)</div>
<div class="t" style="left:449.44px;top:430.0px;">自动选择</div>
<div class="t" style="left:511.59px;top:430.0px;">否</div>
<div class="t" style="left:572.53px;top:430.0px;">否</div>
<div style="left:30px;top:446px;width:51px;height:15px;background:#d4d0c8;box-shadow:inset 1px 1px 0 #fff,inset 0 -1px 0 #808080"></div>
<div style="left:30px;top:461px;width:52px;height:1px;background:#000"></div>
<div style="left:83px;top:461px;width:544px;height:1px;background:#c0c0c0"></div>
<div class="mo mr" style="right:670.78px;top:447.0px;">22</div>
<div class="mo" style="left:84.66px;top:447.0px;">2222</div>
<div class="mo mr" style="right:548.72px;top:447.0px;">5.00</div>
<div class="mo mr" style="right:487.78px;top:447.0px;">100.00</div>
<div class="mo mr" style="right:430.59px;top:447.0px;">0.00</div>
<div class="mo" style="left:324.56px;top:447.0px;">PQFP(BQFP)(V)</div>
<div class="t" style="left:449.44px;top:446.0px;">自动选择</div>
<div class="t" style="left:511.59px;top:446.0px;">否</div>
<div class="t" style="left:572.53px;top:446.0px;">否</div>
<div style="left:30px;top:462px;width:51px;height:15px;background:#d4d0c8;box-shadow:inset 1px 1px 0 #fff,inset 0 -1px 0 #808080"></div>
<div style="left:30px;top:477px;width:52px;height:1px;background:#000"></div>
<div style="left:83px;top:477px;width:544px;height:1px;background:#c0c0c0"></div>
<div class="mo mr" style="right:670.78px;top:463.0px;">23</div>
<div class="mo" style="left:84.66px;top:463.0px;">2263</div>
<div class="mo mr" style="right:548.72px;top:463.0px;">10.00</div>
<div class="mo mr" style="right:487.78px;top:463.0px;">100.00</div>
<div class="mo mr" style="right:430.59px;top:463.0px;">0.00</div>
<div class="mo" style="left:324.56px;top:463.0px;">TSOP(L)</div>
<div class="t" style="left:449.44px;top:462.0px;">自动选择</div>
<div class="t" style="left:511.59px;top:462.0px;">否</div>
<div class="t" style="left:572.53px;top:462.0px;">否</div>
<div style="left:30px;top:478px;width:51px;height:15px;background:#d4d0c8;box-shadow:inset 1px 1px 0 #fff,inset 0 -1px 0 #808080"></div>
<div style="left:30px;top:493px;width:52px;height:1px;background:#000"></div>
<div style="left:83px;top:493px;width:544px;height:1px;background:#c0c0c0"></div>
<div class="mo mr" style="right:670.78px;top:479.0px;">24</div>
<div class="mo" style="left:84.66px;top:479.0px;">2264</div>
<div class="mo mr" style="right:548.72px;top:479.0px;">15.00</div>
<div class="mo mr" style="right:487.78px;top:479.0px;">100.00</div>
<div class="mo mr" style="right:430.59px;top:479.0px;">0.00</div>
<div class="mo" style="left:324.56px;top:479.0px;">TSOP(V)</div>
<div class="t" style="left:449.44px;top:478.0px;">自动选择</div>
<div class="t" style="left:511.59px;top:478.0px;">否</div>
<div class="t" style="left:572.53px;top:478.0px;">否</div>
<div style="left:30px;top:494px;width:51px;height:14px;background:#d4d0c8;box-shadow:inset 1px 1px 0 #fff,inset 0 -1px 0 #808080"></div>
<div style="left:30px;top:508px;width:52px;height:1px;background:#000"></div>
<div style="left:83px;top:508px;width:544px;height:1px;background:#c0c0c0"></div>
<div class="mo mr" style="right:670.78px;top:495.0px;">25</div>
<div class="mo" style="left:84.66px;top:495.0px;">2265</div>
<div class="mo mr" style="right:548.72px;top:495.0px;">20.00</div>
<div class="mo mr" style="right:487.78px;top:495.0px;">100.00</div>
<div class="mo mr" style="right:430.59px;top:495.0px;">0.00</div>
<div class="mo" style="left:324.56px;top:495.0px;">BGA(V)</div>
<div class="t" style="left:449.44px;top:494.0px;">自动选择</div>
<div class="t" style="left:511.59px;top:494.0px;">否</div>
<div class="t" style="left:572.53px;top:494.0px;">否</div>
<div style="left:30px;top:509px;width:51px;height:7px;background:#d4d0c8;box-shadow:inset 1px 1px 0 #fff"></div>
<div class="mo mr" style="right:670.78px;top:510.0px;height:6px;overflow:hidden">26</div>
<div class="mo" style="left:84.66px;top:510.0px;height:6px;overflow:hidden">2266</div>
<div class="mo mr" style="right:548.72px;top:510.0px;height:6px;overflow:hidden">25.00</div>
<div class="mo mr" style="right:487.78px;top:510.0px;height:6px;overflow:hidden">100.00</div>
<div class="mo mr" style="right:430.59px;top:510.0px;height:6px;overflow:hidden">0.00</div>
<div class="mo" style="left:324.56px;top:510.0px;height:6px;overflow:hidden">FBGA</div>
<div class="t" style="left:449.44px;top:509.0px;height:6px;overflow:hidden">自动选择</div>
<div class="t" style="left:511.59px;top:509.0px;height:6px;overflow:hidden">否</div>
<div class="t" style="left:572.53px;top:509.0px;height:6px;overflow:hidden">否</div>
<div style="left:723px;top:95px;width:15px;height:420px;background:repeating-conic-gradient(#fff 0 25%,#d8d4cc 0 50%) 0 0/2px 2px"></div>
<div style="left:723px;top:95px;width:15px;height:15px;box-shadow:inset -1px -1px 0 #404040,inset 1px 1px 0 #fff,inset -2px -2px 0 #808080;background:#d4d0c8"></div>
<svg style="left:727.12px;top:100.69px" width="6.56" height="3.75" viewBox="0 0 7 4"><path d="M3.500 0L7 4H0z" fill="#000"/></svg>
<div style="left:723px;top:110px;width:15px;height:15px;box-shadow:inset -1px -1px 0 #404040,inset 1px 1px 0 #fff,inset -2px -2px 0 #808080;background:#d4d0c8"></div>
<div style="left:723px;top:500px;width:15px;height:15px;box-shadow:inset -1px -1px 0 #404040,inset 1px 1px 0 #fff,inset -2px -2px 0 #808080;background:#d4d0c8"></div>
<svg style="left:727.12px;top:505.69px" width="6.56" height="3.75" viewBox="0 0 7 4"><path d="M0 0h7L3.500 4z" fill="#000"/></svg>
<div style="left:470px;top:118px;width:78px;height:70px;background:#d4d0c8;box-shadow:inset 1px 1px 0 #d4d0c8,inset -1px -1px 0 #404040,inset 2px 2px 0 #fff,inset -2px -2px 0 #808080"></div>
<div class="ui m" style="left:489.38px;top:120.94px;height:16px;line-height:16px">自动<i>(A)</i></div>
<div class="ui m" style="left:488.44px;top:136.88px;font-size:10.3px;height:16px;line-height:16px">Left</div>
<div class="ui m" style="left:488.44px;top:152.81px;font-size:10.3px;height:16px;line-height:16px">Center</div>
<div class="ui m" style="left:488.44px;top:168.75px;font-size:10.3px;height:16px;line-height:16px">Right</div>
<div style="left:28px;top:516px;width:158px;height:18px;box-shadow:inset -1px -1px 0 #404040,inset 1px 1px 0 #fff,inset -2px -2px 0 #808080;background:#d4d0c8"></div>
<div style="left:29px;top:518px;width:6px;height:15px;box-shadow:inset -1px 0 0 #808080"></div>
<div style="left:36px;top:518px;width:16px;height:15px;box-shadow:inset 1px 1px 0 #fff,inset -1px -1px 0 #808080"></div>
<svg style="left:38.81px;top:520.31px" width="10.31" height="10.31" viewBox="0 0 11 11"><path d="M2 1h1.500v9H2zM9 1v9L4 5.500z" fill="#808080"/></svg>
<div style="left:53px;top:518px;width:16px;height:15px;box-shadow:inset 1px 1px 0 #fff,inset -1px -1px 0 #808080"></div>
<svg style="left:55.69px;top:520.31px" width="10.31" height="10.31" viewBox="0 0 11 11"><path d="M8 1v9L3 5.500z" fill="#808080"/></svg>
<div style="left:70px;top:518px;width:30px;height:15px;background:#fff;box-shadow:inset 1px 1px 0 #808080,inset -1px -1px 0 #fff"></div>
<div class="mo mr" style="right:655.31px;top:517.97px;">1</div>
<div style="left:101px;top:518px;width:17px;height:15px;box-shadow:inset 1px 1px 0 #fff,inset -1px -1px 0 #808080"></div>
<svg style="left:104.06px;top:520.31px" width="10.31" height="10.31" viewBox="0 0 11 11"><path d="M3 1v9l5-4.500z" fill="#000"/></svg>
<div style="left:118px;top:518px;width:17px;height:15px;box-shadow:inset 1px 1px 0 #fff,inset -1px -1px 0 #808080"></div>
<svg style="left:120.94px;top:520.31px" width="10.31" height="10.31" viewBox="0 0 11 11"><path d="M2 1v9l5-4.500zM7.500 1H9v9H7.500z" fill="#000"/></svg>
<div class="mo" style="left:140.62px;top:518.91px;">/&nbsp;27</div>
<div style="left:3px;top:545px;width:468px;height:16px;box-shadow:inset 1px 1px 0 #808080,inset -1px -1px 0 #fff"></div>
<div style="left:473px;top:545px;width:188px;height:16px;box-shadow:inset 1px 1px 0 #808080,inset -1px -1px 0 #fff"></div>
<div style="left:663px;top:545px;width:85px;height:16px;box-shadow:inset 1px 1px 0 #808080,inset -1px -1px 0 #fff"></div>
<div class="t" style="left:10.31px;top:544.69px;">编辑键</div>
<div class="mo" style="left:49.69px;top:545.16px;">F2</div>
<div class="mo" style="left:523.12px;top:545.16px;">KD-2077&nbsp;PRODUCT</div>
<div class="mo" style="left:664.69px;top:545.16px;">10:18:52</div>
</div></body></html>
